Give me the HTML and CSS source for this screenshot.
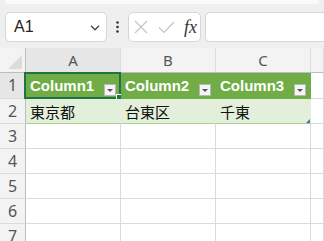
FILE: index.html
```html
<!DOCTYPE html>
<html lang="ja">
<head>
    <meta charset="UTF-8">
    <title>Sheet</title>
    <link rel="stylesheet" href="styles.css">
</head>
<body>
    <div class="ribbon-edge"></div>
    <div class="formula-bar">
        <div class="name-box">
            <span>A1</span>
            <svg class="chevron" width="10" height="6" viewBox="0 0 10 6"><path d="M1 0.8 L5 4.8 L9 0.8" fill="none" stroke="#444" stroke-width="1.3"/></svg>
        </div>
        <div class="more">
            <svg width="3" height="12" viewBox="0 0 3 12"><circle cx="1.5" cy="1.5" r="1.3" fill="#333"/><circle cx="1.5" cy="6" r="1.3" fill="#333"/><circle cx="1.5" cy="10.5" r="1.3" fill="#333"/></svg>
        </div>
        <div class="fx-buttons">
            <svg width="14" height="14" viewBox="0 0 14 14"><path d="M1 1 L13 13 M13 1 L1 13" stroke="#c4c4c4" stroke-width="1.2" fill="none"/></svg>
            <svg width="17" height="13" viewBox="0 0 17 13"><path d="M1 6.5 L6 11.5 L16 1" stroke="#c4c4c4" stroke-width="1.2" fill="none"/></svg>
            <span class="fx">fx</span>
        </div>
        <div class="formula-input"></div>
    </div>

    <div class="sheet">
        <div class="corner"><span class="tri"></span></div>
        <div class="col-head active">A</div>
        <div class="col-head">B</div>
        <div class="col-head">C</div>
        <div class="col-head"></div>

        <div class="row-head active">1</div>
        <div class="cell th selected">Column1<span class="filter"></span></div>
        <div class="cell th">Column2<span class="filter"></span></div>
        <div class="cell th">Column3<span class="filter"></span></div>
        <div class="cell"></div>

        <div class="row-head">2</div>
        <div class="cell band">東京都</div>
        <div class="cell band">台東区</div>
        <div class="cell band last">千東</div>
        <div class="cell"></div>

        <div class="row-head">3</div>
        <div class="cell"></div><div class="cell"></div><div class="cell"></div><div class="cell"></div>
        <div class="row-head">4</div>
        <div class="cell"></div><div class="cell"></div><div class="cell"></div><div class="cell"></div>
        <div class="row-head">5</div>
        <div class="cell"></div><div class="cell"></div><div class="cell"></div><div class="cell"></div>
        <div class="row-head">6</div>
        <div class="cell"></div><div class="cell"></div><div class="cell"></div><div class="cell"></div>
        <div class="row-head">7</div>
        <div class="cell"></div><div class="cell"></div><div class="cell"></div><div class="cell"></div>
    </div>
</body>
</html>
```

FILE: styles.css
```css
body {
    margin: 0;
    background-color: #efefef;
    font-family: "Liberation Sans", "Noto Sans CJK JP", sans-serif;
    overflow: hidden;
    height: 241px;
}
.ribbon-edge {
    height: 4px;
    margin: 0 5px;
    background-color: #fafafa;
    border-radius: 0 0 6px 6px;
}
.formula-bar {
    display: flex;
    align-items: center;
    height: 30px;
    margin: 8px 0 6px 5px;
}
.name-box {
    box-sizing: border-box;
    width: 102px;
    height: 30px;
    display: flex;
    align-items: center;
    justify-content: space-between;
    padding: 0 6px 0 8px;
    background-color: #fff;
    border: 1px solid #d6d6d6;
    border-radius: 5px;
    font-size: 16px;
    color: #222;
}
.chevron {
    margin-top: 1px;
}
.more {
    width: 21px;
    display: flex;
    justify-content: center;
}
.fx-buttons {
    box-sizing: border-box;
    width: 73px;
    height: 30px;
    display: flex;
    align-items: center;
    gap: 10px;
    padding-left: 5px;
    background-color: #fff;
    border: 1px solid #d6d6d6;
    border-radius: 5px;
}
.fx {
    font-family: "Liberation Serif", serif;
    font-style: italic;
    font-size: 18px;
    color: #333;
    margin-left: -1px;
}
.formula-input {
    flex: 1;
    height: 30px;
    box-sizing: border-box;
    margin-left: 4px;
    background-color: #fff;
    border: 1px solid #d6d6d6;
    border-right: none;
    border-radius: 5px 0 0 5px;
}
.sheet {
    display: grid;
    grid-template-columns: 26px 95px 95px 95px 1fr;
    grid-template-rows: 25px 26px;
    grid-auto-rows: 25px;
    background-color: #fff;
}
.sheet > div {
    box-sizing: border-box;
    border-right: 1px solid #dadada;
    border-bottom: 1px solid #dadada;
}
.corner {
    position: relative;
    background-color: #f3f3f3;
    border-right-color: #bdbdbd !important;
    border-bottom-color: #bdbdbd !important;
}
.tri {
    position: absolute;
    right: 3px;
    bottom: 3px;
    width: 0;
    height: 0;
    border-left: 14px solid transparent;
    border-bottom: 14px solid #dcdcdc;
}
.col-head {
    background-color: #f3f3f3;
    border-bottom-color: #bdbdbd !important;
    border-right-color: #dcdcdc !important;
    text-align: center;
    line-height: 25px;
    font-family: "Noto Sans", sans-serif;
    font-size: 15px;
    color: #555;
}
.row-head {
    background-color: #f3f3f3;
    border-right-color: #bdbdbd !important;
    border-bottom-color: #dcdcdc !important;
    text-align: center;
    line-height: 25px;
    font-family: "Noto Sans", sans-serif;
    font-size: 16px;
    color: #555;
}
.col-head.active,
.row-head.active {
    background-color: #e6e6e6;
}
.cell {
    position: relative;
    padding-left: 4px;
    line-height: 25px;
    font-size: 15px;
    color: #111;
    white-space: nowrap;
}
.th {
    background-color: #70ad47;
    color: #fff;
    font-weight: bold;
    border-right-color: #70ad47 !important;
    border-bottom-color: #70ad47 !important;
}
.filter {
    position: absolute;
    right: 4px;
    top: 11px;
    box-sizing: border-box;
    width: 12px;
    height: 12px;
    background-color: #f4f4f4;
    border: 1px solid #b8b8b8;
}
.filter::after {
    content: "";
    position: absolute;
    left: 2px;
    top: 4px;
    border-left: 3px solid transparent;
    border-right: 3px solid transparent;
    border-top: 3px solid #555;
}
.band {
    background-color: #e2efda;
    border-right-color: #e2efda !important;
    border-bottom-color: #a9d08e !important;
    font-family: "Noto Sans CJK JP", sans-serif;
    font-size: 15px;
}
.last::after {
    content: "";
    position: absolute;
    right: 0;
    bottom: 0;
    border-left: 4px solid transparent;
    border-bottom: 4px solid #4a6fa5;
}
.selected::before {
    content: "";
    position: absolute;
    left: -2px;
    top: -1px;
    right: -1px;
    bottom: -1px;
    border: 2px solid #217346;
}
.selected::after {
    content: "";
    position: absolute;
    right: -3px;
    bottom: -3px;
    width: 5px;
    height: 5px;
    background-color: #217346;
    border: 1px solid #fff;
}
```
